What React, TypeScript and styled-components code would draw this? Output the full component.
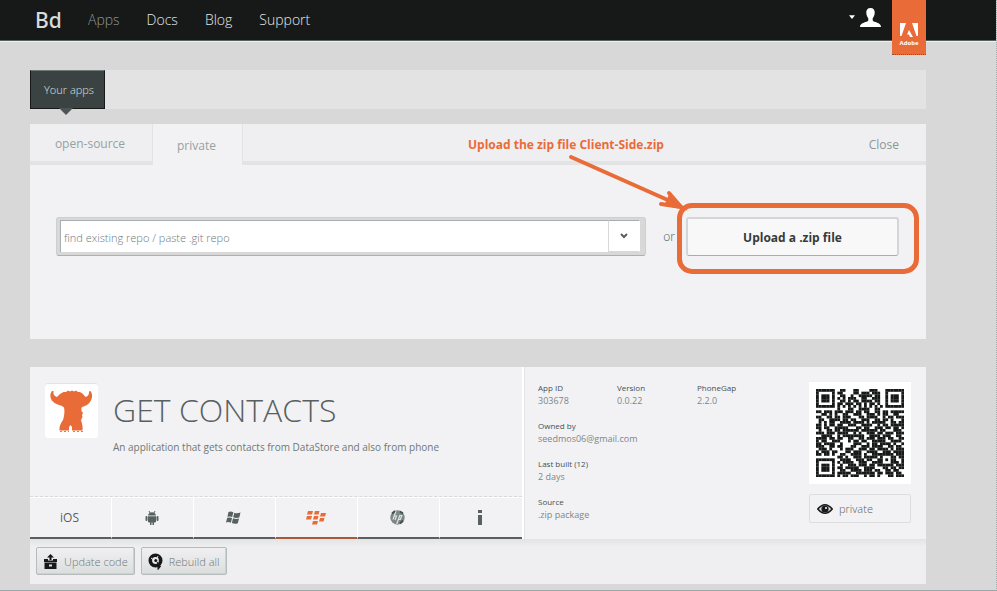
import React from "react";
import styled, { createGlobalStyle } from "styled-components";

const ORANGE = "#e96b38";

const GlobalStyle = createGlobalStyle`
  * { box-sizing: border-box; }
  body {
    margin: 0;
    background: #d8d8d8;
    color: #586061;
    font-family: "Open Sans", "Noto Sans", sans-serif;
    font-size: 12px;
    font-weight: 300;
  }
  button, input { font: inherit; color: inherit; margin: 0; }
  a { color: inherit; text-decoration: none; }
  svg { display: block; flex: none; }
`;

const Page = styled.div`
  min-height: 100vh;
  border-right: 1px dotted #a3aeae;
  border-bottom: 1px solid #9aa7a8;
`;

const Header = styled.header`
  display: flex;
  height: 42px;
  padding: 0 70px 0 35px;
  background: #171918;
  border-bottom: 1px solid #f0f0f0;
  box-shadow: inset 0 -1px #586061;
`;

const Logo = styled.a`
  font-family: "Noto Sans", sans-serif;
  font-size: 21px;
  font-weight: 500;
  line-height: 40px;
  color: #d8dcdc;
  width: 53px;
`;

const Nav = styled.nav`
  display: flex;
  gap: 27px;
`;

const NavLink = styled.a<{ $active?: boolean }>`
  font-size: 14px;
  line-height: 40px;
  color: ${(p) => (p.$active ? "#8c9798" : "#e3e8e8")};
`;

const Account = styled.button`
  display: flex;
  align-items: center;
  gap: 5px;
  height: 34px;
  margin: 0 11px 0 auto;
  padding: 0;
  border: 0;
  background: none;
  color: #fff;
`;

const AdobeBadge = styled.a`
  display: flex;
  flex-direction: column;
  align-items: center;
  gap: 2px;
  width: 34px;
  height: 55px;
  padding-top: 23px;
  background: ${ORANGE};
  color: #fff;
  border-bottom: 1px dotted #586061;
  font-size: 6px;
  font-weight: 700;
  line-height: 8px;
  z-index: 1;
`;

const Main = styled.main`
  padding: 28px 70px 5px 30px;
`;

const AppsBar = styled.div`
  display: flex;
  height: 39px;
  margin-bottom: 15px;
  background: #e3e3e3;
`;

const AppsTab = styled.a`
  position: relative;
  width: 75px;
  padding-left: 13px;
  background: #3b4242;
  border: 1px solid #171918;
  border-top-color: #707b7c;
  color: #dde3e3;
  font-size: 11px;
  line-height: 38px;
  &::after {
    content: "";
    position: absolute;
    top: 100%;
    left: 28px;
    border: 7px solid transparent;
    border-top-color: #4c5455;
    border-bottom: 0;
  }
`;

const Panel = styled.section`
  background: #f2f2f4;
  margin-bottom: 28px;
`;

const Tabs = styled.div`
  display: flex;
  height: 41px;
  background: #f2f2f4;
`;

const Tab = styled.button<{ $selected?: boolean }>`
  width: ${(p) => (p.$selected ? "90px" : "122px")};
  padding: 2px 2px 0 0;
  border: 0;
  border-left: ${(p) => (p.$selected ? "1px solid #e3e3e3" : "0")};
  border-bottom: ${(p) => (p.$selected ? "0" : "4px solid #e3e3e3")};
  background: ${(p) => (p.$selected ? "#f2f2f4" : "#efeff1")};
  color: #96a1a2;
  font-size: 12px;
  font-weight: 400;
`;

const TabRest = styled.div`
  display: flex;
  flex: 1;
  align-items: center;
  justify-content: space-between;
  padding: 0 27px 0 225px;
  background: #efeff1;
  border-left: 1px solid #e3e3e3;
  border-bottom: 4px solid #e3e3e3;
`;

const Note = styled.strong`
  padding-top: 4px;
  color: ${ORANGE};
  font-size: 12px;
  font-weight: 700;
  line-height: 16px;
  white-space: nowrap;
`;

const CloseButton = styled.button`
  padding: 3px 0 0;
  border: 0;
  background: none;
  color: #8c9798;
  font-size: 12px;
  font-weight: 400;
`;

const UploadRow = styled.div`
  display: flex;
  align-items: center;
  padding: 52px 27px 83px 26px;
`;

const RepoField = styled.div`
  display: flex;
  flex: 1;
  height: 39px;
  padding: 2px 5px 3px 3px;
  background: #d8d8d8;
  border: 1px solid #cdd0d0;
  border-bottom-color: #a9b1b1;
  border-radius: 3px;
`;

const RepoInput = styled.input`
  flex: 1;
  min-width: 0;
  padding: 1px 3px 0;
  border: 1px solid #a6afb0;
  border-width: 1px 0 0 1px;
  background: #fff;
  outline: 0;
  font-size: 11px;
  &::placeholder { color: #6e7879; opacity: 1; }
`;

const Toggle = styled.button`
  display: grid;
  place-items: center;
  width: 32px;
  padding: 0;
  border: 1px solid #d8d8d8;
  border-top-color: #a6afb0;
  border-right-color: #fff;
  background: #fff;
`;

const Or = styled.span`
  padding: 0 11px 0 17px;
  color: #586061;
`;

const UploadTarget = styled.div`
  position: relative;
  width: 213px;
`;

const UploadButton = styled.button`
  width: 100%;
  height: 39px;
  border: 2px solid #d3d5d6;
  border-bottom: 1px solid #a6afb0;
  border-radius: 3px;
  background: #f8f8f9;
  color: #353b3b;
  font-size: 12px;
  font-weight: 700;
`;

const Highlight = styled.div`
  position: absolute;
  inset: -14px -20px -18px -9px;
  border: 5px solid ${ORANGE};
  border-radius: 15px;
  pointer-events: none;
`;

const Arrow = styled.svg`
  position: absolute;
  right: 211px;
  top: -64px;
  pointer-events: none;
`;

const AppCard = styled.article`
  background: #f2f2f4;
`;

const CardBody = styled.div`
  display: grid;
  grid-template-columns: 494fr 402fr;
  height: 172px;
`;

const Summary = styled.div`
  display: flex;
  flex-direction: column;
  min-width: 0;
  border-right: 2px solid #fff;
`;

const Intro = styled.div`
  display: flex;
  flex: 1;
  gap: 15px;
  padding: 17px 0 0 15px;
`;

const AppIcon = styled.div`
  display: grid;
  place-items: center;
  width: 53px;
  height: 54px;
  background: #fff;
  border-radius: 3px;
  box-shadow: 0 -1px #e3e3e3;
`;

const Title = styled.h1`
  margin: 4px 0 0;
  color: #586061;
  font-size: 32px;
  font-weight: 300;
  line-height: 44px;
`;

const Description = styled.p`
  margin: 7px 0 0;
  color: #6e7879;
  font-size: 10px;
  font-weight: 400;
  line-height: 16px;
`;

const Platforms = styled.div`
  display: grid;
  grid-template-columns: repeat(6, 1fr);
  height: 43px;
  border-top: 1px dashed #d8d8d8;
`;

const Platform = styled.button<{ $failed?: boolean }>`
  display: grid;
  place-items: center;
  padding: 0 2px 0 0;
  border: 0;
  border-top: 1px solid #fff;
  border-right: 1px solid #fff;
  border-bottom: 2px solid ${(p) => (p.$failed ? "#a8593a" : "#586061")};
  background: none;
  color: ${(p) => (p.$failed ? ORANGE : "#586061")};
  font-size: 12px;
  font-weight: 500;
  &:last-child { border-right: 0; }
`;

const Details = styled.div`
  display: flex;
  min-width: 0;
  justify-content: space-between;
  padding: 15px 15px 0 13px;
  border-left: 1px solid #e3e3e3;
`;

const Facts = styled.dl`
  display: grid;
  grid-template-columns: 79px 80px 80px;
  grid-auto-rows: 38px;
  margin: 0;
`;

const Fact = styled.div<{ $wide?: boolean }>`
  grid-column: ${(p) => (p.$wide ? "1 / -1" : "auto")};
  dt { font-size: 8px; font-weight: 400; line-height: 11px; color: #465051; }
  dd { margin: 0; font-size: 9px; font-weight: 400; line-height: 16px; color: #7c8788; }
`;

const Side = styled.div`
  display: flex;
  flex-direction: column;
  gap: 10px;
  width: 102px;
`;

const QrFrame = styled.div`
  display: grid;
  place-items: center;
  height: 102px;
  background: #fff;
`;

const Privacy = styled.button`
  display: flex;
  align-items: center;
  gap: 6px;
  height: 29px;
  padding: 0 7px;
  border: 1px solid #dcdede;
  border-radius: 2px;
  background: #f2f2f4;
  color: #586061;
  font-size: 11px;
`;

const Actions = styled.div`
  display: flex;
  gap: 6px;
  padding: 8px 6px 9px;
  background: linear-gradient(#e3e3e3, #efeff1 8px);
`;

const ActionButton = styled.button`
  display: flex;
  align-items: center;
  gap: 6px;
  height: 28px;
  padding: 0 6px;
  border: 1px solid #b4bcbc;
  border-radius: 2px;
  background: linear-gradient(#f0f0f2, #dcdddd);
  box-shadow: inset -1px -1px #cfd1d1;
  color: #6e7879;
  font-size: 11px;
`;

const QR_ROWS = [
  "1111111..11...11....111...1111111",
  "1.....1.11....11.111.111..1.....1",
  "1.111.1..11..1..11111.11..1.111.1",
  "1.111.1.1.1.111..11..111..1.111.1",
  "1.111.1..11.1.11.1111.11..1.111.1",
  "1.....1.11.111.11.1.11.1..1.....1",
  "1111111.1.1.1.1.1.1.1.1.1.1111111",
  "........1...11..1111..11.........",
  "11.111.111.111.11.11..11.11.11111",
  "..11.1.1..11..111..111.1.11..11..",
  "11..11.11.111...11.1111..1.11.111",
  ".11..1111.11.11..111..11.11.1...1",
  ".1.1.11..1111.1111.1.11111..11.11",
  "11.1.11.11..111..1111..1.11.11111",
  "11.11..11111...11.11..111.11.11.1",
  ".1..11.11.111111.111111.11...111.",
  "111.111.1111..1.1..111.11.111.111",
  "..1111..1.11111111..1111.111..11.",
  "1111.11.11..11..11.111.111.11..11",
  "1.11..111...1.11.11..11111..1111.",
  "11.1111..1....111..1.11.1111.1..1",
  "111..11.11...11..111.1111..11.11.",
  ".111.1...1.111..111.11.1111.1.111",
  "1.111.11...11.111..1111..111.1111",
  "11.11.1..11..1111.1..11111111.111",
  "........11.1..111.11111.1...11.11",
  "1111111..1111..111.11..11.1.11..1",
  "1.....1.1.1111..111..1111...111.1",
  "1.111.1..1..111.111.11.111111.111",
  "1.111.1.11.11111..1111...11.11.11",
  "1.111.1..11..1111.111.11..11.11..",
  "1.....1.11111..1111111.11.111.11.",
  "1111111.1.11.111..1.11.1...11.111",
];

function QrCode() {
  return (
    <svg width="88" height="88" viewBox="0 0 33 33" role="img" aria-label="QR code">
      {QR_ROWS.map((row, y) =>
        [...row].map((cell, x) =>
          cell === "1" ? <rect key={`${x}-${y}`} x={x} y={y} width="1.05" height="1.05" fill="#171918" /> : null
        )
      )}
    </svg>
  );
}

const AndroidIcon = () => (
  <svg width="14" height="14" viewBox="0 0 14 14" fill="currentColor">
    <path d="M3 4.600C3.200 2.600 4.800 1.300 7 1.300s3.800 1.300 4 3.300z" />
    <path d="M4 0l1 2M10 0L9 2" stroke="currentColor" />
    <path d="M3 5.200h8v5.300a1 1 0 0 1-1 1H9V14H7.500v-2.500h-1V14H5v-2.500H4a1 1 0 0 1-1-1z" />
    <rect x="0.500" y="5" width="2" height="5" rx="1" />
    <rect x="11.500" y="5" width="2" height="5" rx="1" />
  </svg>
);

const WindowsIcon = () => (
  <svg width="15" height="13" viewBox="0 0 15 13" fill="currentColor">
    <path d="M2.500 1Q5 0 7.300 1.300L6.200 6Q4 5 1.400 5.800zM8.300 1.700Q11 2.800 14.500 1.500L13.300 6.500Q10 7.500 7.200 6.300zM1.200 6.800Q4 6 6 7L4.900 11.700Q2.500 10.600 0 11.500zM7 7.300Q10 8.500 13 7.500L11.800 12.200Q9 13.300 5.900 12z" />
  </svg>
);

const BlackberryIcon = () => (
  <svg width="20" height="15" viewBox="0 0 20 15" fill="currentColor">
    <path d="M2 1h5l-1 3.500H1zM9 1h4.500l-1 3.500H8zM1 6h5l-1 3.500H0zM8 6h4.500l-1 3.500H7zM15 3h5l-1 3.500h-5zM14 8h4.500l-1 3.500H13zM7 11h5l-1 3.500H6z" />
  </svg>
);

const HpIcon = () => (
  <svg width="15" height="15" viewBox="0 0 15 15">
    <circle cx="7.500" cy="7.500" r="7.200" fill="#7c8788" />
    <path d="M6 1L3 9.500M4.300 6h2.200L5 10M10 5L6.700 14M9.500 5.500h2.300l-1.500 4H8.500" fill="none" stroke="#e3e3e3" strokeWidth="1.200" />
    <path d="M2 3.500L5 1M10 13.500l3-3M10 1.500l3 2" stroke="#465051" strokeWidth="2" />
  </svg>
);

const InfoIcon = () => (
  <svg width="6" height="15" viewBox="0 0 6 15" fill="currentColor">
    <path d="M1 0h4v3H1zM1 5h4v10H1z" />
  </svg>
);

const UploadBoxIcon = () => (
  <svg width="15" height="15" viewBox="0 0 15 15" fill="#171918">
    <path d="M7.500 0L11 3.500H8.500V6h-2V3.500H4zM1 5h4v1.500h5V5h4v3H1z" />
    <path d="M1.500 8.500h12V15h-12zM6 10.500v2h3v-2z" fillRule="evenodd" />
  </svg>
);

const RebuildIcon = () => (
  <svg width="15" height="17" viewBox="0 0 15 17" fill="none" stroke="#171918">
    <circle cx="7.500" cy="7.500" r="5.200" strokeWidth="3.600" />
    <circle cx="7.800" cy="7.500" r="1.500" fill="#171918" stroke="none" />
    <path d="M9 9l3.500 4.500L10 16.500V12" fill="#171918" />
    <path d="M3 5l2 1.500M10 3L9 5" stroke="#e3e3e3" />
  </svg>
);

const EyeIcon = () => (
  <svg width="16" height="12" viewBox="0 0 16 12">
    <path d="M0.800 6Q8-2.500 15.200 6 8 14.500.800 6z" fill="#d8d8d8" stroke="#171918" strokeWidth="1.600" />
    <circle cx="8" cy="6" r="3.600" fill="#171918" />
    <circle cx="9" cy="5" r="1" fill="#fff" />
  </svg>
);

const MonsterIcon = () => (
  <svg width="43" height="44" viewBox="0 0 43 44" fill={ORANGE}>
    <path d="M2 2C-.500 5 0 10 3 12.500 6 16 11 15.500 14 18.500c1 4.500 0 9-1 12.500-2 3-4 6-3.500 10.500H19V38l1.500-2 1.500 2v3.500h10.500c.500-4-.500-7-1.500-10.500l1.500-3-.500-2 1-2-1.500-2c0-2-.500-2.500.500-4 3-1 6-2 8-5 2.500-3.500 3-7.500.500-11l-1.500.500c0 3-.500 4.500-3.500 5.500L33 5l-3-2-2 0L26 1.500l-2 1-2-1-2 1-2-1-2 1.500-2.500 0L10 5 7 8C4 7 3 5 3.500 2z" />
    <path d="M10 42.500h9M23 42.500h10" stroke="#8c9798" strokeDasharray="2 2" />
  </svg>
);

export default function App() {
  return (
    <>
      <GlobalStyle />
      <Page>
        <Header>
          <Logo href="#">Bd</Logo>
          <Nav>
            <NavLink href="#apps" $active>Apps</NavLink>
            <NavLink href="#docs">Docs</NavLink>
            <NavLink href="#blog">Blog</NavLink>
            <NavLink href="#support">Support</NavLink>
          </Nav>
          <Account aria-label="Account">
            <svg width="6" height="4" viewBox="0 0 8 5" fill="#fff"><path d="M0 0h8L4 5z" /></svg>
            <svg width="21" height="19" viewBox="0 0 21 19" fill="#fff">
              <path d="M10.500 0C7.500 0 6 2 6.300 5c.200 2.500 1 4 2 5.300v2.200C7.500 14.500 0 14 0 19h21c0-5-7.500-4.500-8.300-6.500v-2.200c1-1.300 1.800-2.800 2-5.300.300-3-1.200-5-4.200-5z" />
            </svg>
          </Account>
          <AdobeBadge href="#adobe">
            <svg width="18" height="14" viewBox="0 0 18 14" fill="#fff">
              <path d="M0 0h6L1.500 13H0zM12 0h6v13h-1.500zM9 7l4 7h-3l-1-2.500H7z" />
            </svg>
            Adobe
          </AdobeBadge>
        </Header>
        <Main>
          <AppsBar>
            <AppsTab href="#your-apps">Your apps</AppsTab>
          </AppsBar>
          <Panel>
            <Tabs>
              <Tab>open-source</Tab>
              <Tab $selected>private</Tab>
              <TabRest>
                <Note>Upload the zip file Client-Side.zip</Note>
                <CloseButton>Close</CloseButton>
              </TabRest>
            </Tabs>
            <UploadRow>
              <RepoField>
                <RepoInput aria-label="Repository" placeholder="find existing repo / paste .git repo" />
                <Toggle aria-label="Show repositories">
                  <svg width="8" height="6" viewBox="0 0 8 6" fill="none" stroke="#586061" strokeWidth="2"><path d="M1 1l3 3 3-3" /></svg>
                </Toggle>
              </RepoField>
              <Or>or</Or>
              <UploadTarget>
                <UploadButton>Upload a .zip file</UploadButton>
                <Highlight />
                <Arrow width="122" height="60" viewBox="0 0 122 60" fill="none" stroke={ORANGE} strokeWidth="4" strokeLinecap="round">
                  <path d="M5 4L113 52M103 40l12 14-20-3" />
                  <path d="M104 44l11 10-14-3z" fill={ORANGE} />
                </Arrow>
              </UploadTarget>
            </UploadRow>
          </Panel>
          <AppCard>
            <CardBody>
              <Summary>
                <Intro>
                  <AppIcon><MonsterIcon /></AppIcon>
                  <div>
                    <Title>GET CONTACTS</Title>
                    <Description>An application that gets contacts from DataStore and also from phone</Description>
                  </div>
                </Intro>
                <Platforms>
                  <Platform>iOS</Platform>
                  <Platform aria-label="Android"><AndroidIcon /></Platform>
                  <Platform aria-label="Windows"><WindowsIcon /></Platform>
                  <Platform aria-label="BlackBerry" $failed><BlackberryIcon /></Platform>
                  <Platform aria-label="webOS"><HpIcon /></Platform>
                  <Platform aria-label="Symbian"><InfoIcon /></Platform>
                </Platforms>
              </Summary>
              <Details>
                <Facts>
                  <Fact><dt>App ID</dt><dd>303678</dd></Fact>
                  <Fact><dt>Version</dt><dd>0.0.22</dd></Fact>
                  <Fact><dt>PhoneGap</dt><dd>2.2.0</dd></Fact>
                  <Fact $wide><dt>Owned by</dt><dd>seedmos06@gmail.com</dd></Fact>
                  <Fact $wide><dt>Last built (12)</dt><dd>2 days</dd></Fact>
                  <Fact $wide><dt>Source</dt><dd>.zip package</dd></Fact>
                </Facts>
                <Side>
                  <QrFrame><QrCode /></QrFrame>
                  <Privacy><EyeIcon />private</Privacy>
                </Side>
              </Details>
            </CardBody>
            <Actions>
              <ActionButton><UploadBoxIcon />Update code</ActionButton>
              <ActionButton><RebuildIcon />Rebuild all</ActionButton>
            </Actions>
          </AppCard>
        </Main>
      </Page>
    </>
  );
}
